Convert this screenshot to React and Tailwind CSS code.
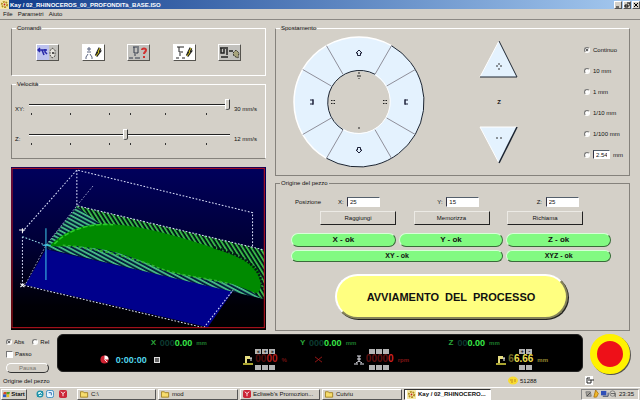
import React from "react";

function Group({ title, edges, className = "", bodyClass = "", children }) {
  return (
    <fieldset className={"min-w-0 border " + edges + " " + className}>
      <legend className="ml-1 h-2 px-px leading-2">{title}</legend>
      <div className={bodyClass}>{children}</div>
    </fieldset>
  );
}

function ToolButton({ label, white, children }) {
  return (
    <button
      aria-label={label}
      className={
        "h-[17px] w-[23px] border border-t-white border-l-white border-r-[#55534e] border-b-[#55534e] " +
        (white ? "bg-white" : "bg-[#c2c1bd]")
      }
    >
      <svg viewBox="0 0 21 15" className="block h-[15px] w-[21px]" fill="none" stroke="#222">
        {children}
      </svg>
    </button>
  );
}

function Toolbar() {
  return (
    <div className="flex justify-between">
      <ToolButton label="Origine macchina">
        <rect width="12" height="15" fill="#bdc2ee" stroke="none" />
        <path d="M1 5h9M3 3l-2 2 2 2M5 5l2 5M8 4v3l2 2" stroke="#2626a8" strokeWidth="1.500" />
        <path d="M15 3l3 2v6l-3 2-2-3V6z" stroke="#55534e" fill="#e6e4de" strokeDasharray="2 1" />
        <circle cx="16" cy="8" r="1" fill="#222" stroke="none" />
      </ToolButton>
      <ToolButton label="Modifica utensile" white>
        <path d="M6 2v4M4 4h4M4 7h4M5 9l-2 3M7 9l2 3M2 13h2M8 13h2" stroke="#5a6480" />
        <path d="M17 3l-2 4h1l-3 4" stroke="#222" strokeWidth="3" />
        <path d="M17 3l-2 4h1l-3 4" stroke="#d8c820" />
      </ToolButton>
      <ToolButton label="Informazioni utensile">
        <path d="M5 2h6M6 2v6h4V3M7 9v2M1 13h4M7 13h5" stroke="#333b4a" />
        <path d="M14 5c0-2 4-2 4 0 0 2-2 2-2 4M16 11v2" stroke="#d03030" strokeWidth="2" />
      </ToolButton>
      <ToolButton label="Modifica foratura" white>
        <path d="M3 2h7M5 2v5h4M6 8v3M2 13h3M8 13h3" />
        <path d="M17 3l-2 4h1l-3 4" strokeWidth="3" />
        <path d="M17 3l-2 4h1l-3 4" stroke="#d8c820" />
      </ToolButton>
      <ToolButton label="Parametri macchina">
        <path d="M1 3h8M2 3v5h3V4M8 4v6M2 12h7M10 6h4" strokeWidth="1.500" />
        <path d="M14 8l3-3 3 3-1 5-4-2z" fill="#a8a47c" stroke="#33312a" strokeDasharray="2 1" />
      </ToolButton>
    </div>
  );
}

function Speed({ id, axis, value, speed }) {
  return (
    <div className="flex">
      <label htmlFor={id} className="mt-2 w-[14px] leading-2">{axis}</label>
      <div className="flex-1">
        <input
          id={id}
          type="range"
          min="0"
          max="100"
          defaultValue={value}
          className="block h-4 w-full appearance-none bg-transparent [&::-webkit-slider-runnable-track]:h-[2px] [&::-webkit-slider-runnable-track]:border-t [&::-webkit-slider-runnable-track]:border-b [&::-webkit-slider-runnable-track]:border-t-[#222] [&::-webkit-slider-runnable-track]:border-b-white [&::-webkit-slider-thumb]:-mt-[6px] [&::-webkit-slider-thumb]:h-[11px] [&::-webkit-slider-thumb]:w-[5px] [&::-webkit-slider-thumb]:appearance-none [&::-webkit-slider-thumb]:rounded-b-sm [&::-webkit-slider-thumb]:border [&::-webkit-slider-thumb]:border-t-white [&::-webkit-slider-thumb]:border-l-white [&::-webkit-slider-thumb]:border-r-[#333] [&::-webkit-slider-thumb]:border-b-[#555] [&::-webkit-slider-thumb]:bg-[#d4d0c8]"
        />
        <div className="grid grid-cols-[39fr_39fr_21fr_36fr_41fr_24fr] pl-[2px]">
          {[0, 1, 2, 3, 4, 5].map((n) => (
            <span key={n} className="h-[2px] w-px bg-[#333]" />
          ))}
        </div>
      </div>
      <span className="mt-2 w-[34px] pl-1 leading-2 whitespace-nowrap">{speed}</span>
    </div>
  );
}

function Viewer() {
  return (
    <svg
      viewBox="36 21 759 489"
      preserveAspectRatio="none"
      className="mt-2 block h-[163px] w-full"
      role="img"
      aria-label="Percorso utensile"
    >
      <defs>
        <linearGradient id="sky" x1="0" y1="0" x2="0" y2="1">
          <stop offset="0" stopColor="#00005c" />
          <stop offset="0.45" stopColor="#000038" />
          <stop offset="0.85" stopColor="#000006" />
          <stop offset="1" stopColor="#000" />
        </linearGradient>
        <pattern id="hatch" width="11" height="11" patternUnits="userSpaceOnUse" patternTransform="rotate(-32)">
          <rect width="11" height="11" fill="#001a18" />
          <rect width="5" height="11" fill="#3cc44c" />
        </pattern>
        <pattern id="mesh" width="11" height="11" patternUnits="userSpaceOnUse" patternTransform="rotate(28)">
          <rect width="11" height="11" fill="#04203c" />
          <rect width="11" height="5" fill="#4cc58c" />
        </pattern>
      </defs>
      <rect x="36" y="21" width="759" height="489" fill="url(#sky)" />
      <path d="M140 268 L78 375 L622 502 L697 393Z" fill="#00008c" />
      <path d="M232 137 L790 270 L790 418 L690 385 L480 320 L180 240Z" fill="url(#hatch)" />
      <path d="M232 140 L140 256 L150 268 L690 394 L785 416 L700 362 L220 240 L300 190Z" fill="url(#mesh)" />
      <path
        d="M150 258 C190 215 250 190 330 192 C440 198 560 238 640 264 C720 292 775 315 778 350 C782 380 778 402 762 398 L695 372 C600 352 520 345 470 322 C400 290 330 268 260 262 C220 254 190 262 150 258Z"
        fill="#008a00"
      />
      <path d="M165 252 C200 215 260 188 340 194" stroke="#28cc28" strokeWidth="5" strokeDasharray="14 6" fill="none" />
      <path d="M190 256 C280 262 400 292 470 322 C540 348 610 352 690 372" stroke="#30b430" strokeWidth="5" strokeDasharray="9 7" fill="none" />
      <path d="M640 262 C720 285 785 315 784 390" stroke="#051c14" strokeWidth="8" strokeDasharray="6 4" fill="none" />
      <g fill="none" stroke="#dfe5ff" strokeWidth="3" strokeDasharray="5 5">
        <path d="M70 215 L232 30 L755 158 V262" />
        <path d="M232 30 V137 L790 270" />
        <path d="M280 78 L232 137 L140 256 L78 375" strokeWidth="2" />
        <path d="M70 230 V375 L610 503 L697 390" />
        <path d="M70 230 L140 256" stroke="#9adfe8" />
      </g>
      <path d="M140 205 V360 M130 256 H155" stroke="#3cc8ec" strokeWidth="3" />
      <path d="M60 210 H78 M70 205 V220 M64 371 L76 381 M76 371 L64 381" stroke="#fff" strokeWidth="3" />
      <rect x="39" y="25" width="751" height="478" fill="none" stroke="#c01420" strokeWidth="3" />
    </svg>
  );
}

const arrow = "M0 -3 L3 0 H1.500 V2.500 H-1.500 V0 H-3Z";

function Wheel() {
  return (
    <div className="relative h-[132px] w-[132px]">
      <svg viewBox="-66 -66 132 132" className="block h-full w-full" fill="none">
        <circle r="48" stroke="#e4f2fe" strokeWidth="34" />
        <path d="M-32.500 56.300 A65 65 0 0 1 -65 0 A65 65 0 0 1 32.500 -56.300" stroke="#fff" strokeWidth="1.500" />
        <path d="M32.500 -56.300 A65 65 0 0 1 -32.500 56.300" stroke="#1c2430" />
        <path d="M-16 27.700 A32 32 0 0 1 16 -27.700" stroke="#1c2430" />
        <path d="M16 -27.700 A32 32 0 0 1 -16 27.700" stroke="#fff" />
        <path
          d="M16 -27.700 L32.500 -56.300 M27.700 -16 L56.300 -32.500 M27.700 16 L56.300 32.500 M16 27.700 L32.500 56.300 M-16 27.700 L-32.500 56.300 M-27.700 16 L-56.300 32.500 M-27.700 -16 L-56.300 -32.500 M-16 -27.700 L-32.500 -56.300"
          stroke="#8f8f9a"
        />
        <g stroke="#1c2038" strokeWidth="1">
          <path d={arrow} transform="translate(0 -49)" />
          <path d={arrow} transform="translate(0 48) rotate(180)" />
          <path d="M-49 -2H-46V2H-49M-46 -3V3M49 -2H46V2H49M46 -3V3" />
        </g>
        <path d="M0 -30V-28M-2 -26H2M0 -24V-23M0 25V27" stroke="#222" />
        <path d="M-28 -1.500H-24M-28 1.500H-24M24 -1.500H28M24 1.500H28" stroke="#222" strokeDasharray="1.500 1" />
      </svg>
      <div className="absolute inset-0 grid grid-cols-3 grid-rows-3">
        <button aria-label="Y avanti" className="col-start-2 row-start-1" />
        <button aria-label="X sinistra" className="col-start-1 row-start-2" />
        <button aria-label="X destra" className="col-start-3 row-start-2" />
        <button aria-label="Y indietro" className="col-start-2 row-start-3" />
      </div>
    </div>
  );
}

function ZKeys() {
  return (
    <div className="flex flex-col items-center">
      <button aria-label="Z su">
        <svg viewBox="0 0 40 38" className="block h-[38px] w-10" fill="none">
          <path d="M20 1 L38 37 H1Z" fill="#e4f2fe" />
          <path d="M1 37 L20 1" stroke="#fff" />
          <path d="M20 1 L38 37 H1" stroke="#1c2430" />
          <path d="M20 23v2M17 26h2M21 26h2M20 28v2" stroke="#333" />
        </svg>
      </button>
      <span className="my-5 leading-2 font-bold">Z</span>
      <button aria-label="Z giù">
        <svg viewBox="0 0 40 38" className="block h-[38px] w-10" fill="none">
          <path d="M1 1 H38 L20 37Z" fill="#e4f2fe" />
          <path d="M20 37 L1 1 H38" stroke="#fff" />
          <path d="M38 1 L20 37" stroke="#1c2430" strokeWidth="1.500" />
          <path d="M17 12h2M21 12h2" stroke="#333" />
        </svg>
      </button>
    </div>
  );
}

const radioClass =
  "h-[6px] w-[6px] shrink-0 appearance-none rounded-full border border-t-[#777] border-l-[#777] border-r-white border-b-white bg-white bg-clip-padding checked:bg-[#333] checked:shadow-[inset_0_0_0_1px_white]";
const inputClass =
  "border border-t-[#55606c] border-l-[#334] border-r-white border-b-white bg-white px-[2px] leading-2";

function Steps() {
  const steps = ["Continuo", "10 mm", "1 mm", "1/10 mm", "1/100 mm"];
  return (
    <div className="flex flex-col">
      {steps.map((s, i) => (
        <label key={s} className="flex h-[21px] items-center gap-[3px] whitespace-nowrap">
          <input type="radio" name="step" defaultChecked={i === 0} className={radioClass} />
          {s}
        </label>
      ))}
      <div className="flex h-[21px] items-center gap-[3px]">
        <input type="radio" name="step" aria-label="Passo libero" className={radioClass} />
        <input aria-label="Passo" defaultValue="2.54" className={"h-[9px] w-[17px] " + inputClass} />
        mm
      </div>
    </div>
  );
}

const okClass =
  "rounded-full border border-t-[#d8ffd8] border-l-[#d8ffd8] border-r-[#3a6a3a] border-b-[#3a6a3a] bg-[#82fa82] font-bold whitespace-pre";

function Origin() {
  return (
    <>
      <div className="flex items-center">
        <span className="w-[43px] pl-1">Posizione</span>
        <div className="grid flex-1 grid-cols-[99fr_99fr_78fr]">
          {[["X:", "25"], ["Y:", "15"], ["Z:", "25"]].map(([axis, v]) => (
            <label key={axis} className="flex items-center">
              <span className="w-[13px] pl-1">{axis}</span>
              <input defaultValue={v} className={"h-[10px] w-[33px] " + inputClass} />
            </label>
          ))}
        </div>
      </div>
      <div className="mt-1 flex justify-between pr-[28px] pl-[29px]">
        {["Raggiungi", "Memorizza", "Richiama"].map((t) => (
          <button
            key={t}
            className="h-[14px] w-[76px] border border-t-[#eceae5] border-l-[#eceae5] border-r-[#222] border-b-[#222]"
          >
            {t}
          </button>
        ))}
      </div>
      <div className="mt-2 grid grid-cols-3 gap-[3px] text-[8px]">
        <button className={"h-[14px] " + okClass}>X - ok</button>
        <button className={"h-[14px] " + okClass}>Y - ok</button>
        <button className={"h-[14px] " + okClass}>Z - ok</button>
        <button className={"col-span-2 h-[12px] text-[7px] " + okClass}>XY - ok</button>
        <button className={"h-[12px] text-[7px] " + okClass}>XYZ - ok</button>
      </div>
      <button className="mx-auto mt-3 block h-[45px] w-[233px] rounded-full border-2 border-t-white border-l-white border-r-[#85835a] border-b-[#85835a] bg-[#ffff80] text-[11px] font-bold whitespace-pre shadow-[1px_1px_0_#222]">
        AVVIAMENTO  DEL  PROCESSO
      </button>
    </>
  );
}

function Axis({ name, ghost, value }) {
  return (
    <div className="flex items-center gap-1 font-bold text-[#38e848]">
      <span className="w-[5px] text-[8px] text-[#2ba83a]">{name}</span>
      <span className="text-[9px]">
        <span className="text-[#0c3a30]">{ghost}</span>
        {value}
      </span>
      <span className="text-[6px] text-[#1d7a2c]">mm</span>
    </div>
  );
}

function Keys({ count, signs = "", label }) {
  return (
    <div className="flex gap-px">
      {Array.from({ length: count }, (_, i) => (
        <button key={i} aria-label={label + " " + (i + 1)} className="h-[5px] w-[6px] bg-[#b4b4b4] text-[5px] leading-[5px] font-bold text-black">
          {signs[i]}
        </button>
      ))}
    </div>
  );
}

function Drive({ icon, ghost, value, unit, color, count, signs, label, offset }) {
  return (
    <div className={"flex items-center gap-[2px] font-bold " + color}>
      {icon}
      <div className="flex flex-col">
        <div className={offset}><Keys count={count} signs={signs} label={label + " su"} /></div>
        <span className="text-[10px] leading-[10px] whitespace-nowrap">
          <span className="opacity-45">{ghost}</span>
          {value}
          <span className="pl-1 text-[6px] opacity-60">{unit}</span>
        </span>
        <div className={offset}><Keys count={count} label={label + " giù"} /></div>
      </div>
    </div>
  );
}

function MillIcon() {
  return (
    <svg viewBox="0 0 10 10" className="h-[10px] w-[10px] shrink-0" fill="none">
      <path d="M2 1h5v3H4v4H2z" fill="#e4dc80" />
      <path d="M7 3h2M8 3v3" stroke="#fff" />
      <path d="M0 9h10" stroke="#e4dc40" strokeWidth="1.500" />
    </svg>
  );
}

function SpindleIcon() {
  return (
    <svg viewBox="0 0 10 10" className="h-[10px] w-[10px] shrink-0" fill="none" stroke="#e4e4ec">
      <path d="M3 1h4M5 1v5M3 4h4M5 6l-3 2M5 6l3 2M0 9h4M6 9h4" />
    </svg>
  );
}

function Display() {
  return (
    <div className="min-w-0 flex-1 self-start rounded-md border border-[#222] bg-black pt-[2px] pb-px">
      <div className="grid h-3 grid-cols-[93fr_150fr_149fr_134fr] items-center">
        <span />
        <Axis name="X" ghost="000" value="0.00" />
        <Axis name="Y" ghost="000" value="0.00" />
        <Axis name="Z" ghost="00" value="0.00" />
      </div>
      <div className="grid h-[21px] grid-cols-[42fr_144fr_72fr_39fr_143fr_86fr] items-center">
        <span />
        <div className="flex items-center gap-[7px] text-[9px] font-bold text-[#52d8ee]">
          <svg viewBox="0 0 10 10" className="h-[9px] w-[9px]">
            <circle cx="5" cy="5" r="4.500" fill="#cf2232" />
            <path d="M5 0.500A4.500 4.500 0 0 1 9.500 5L5 5Z" fill="#fff" />
            <path d="M5 5L8 8" stroke="#fff" />
          </svg>
          <span>0:00:00</span>
          <button aria-label="Azzera tempo" className="h-[6px] w-[6px] border border-[#ddd] bg-[#666]" />
        </div>
        <Drive label="Avanzamento" icon={<MillIcon />} ghost="00" value="00" unit="%" color="text-[#b01c1c]" count={3} signs="«+»" offset="pl-0" />
        <svg viewBox="0 0 8 8" className="h-[7px] w-[7px]" stroke="#a81818">
          <path d="M0 1L8 7M8 1L0 7" />
        </svg>
        <Drive label="Mandrino" icon={<SpindleIcon />} ghost="0000" value="0" unit="rpm" color="text-[#d02020]" count={3} offset="pl-[3px]" />
        <Drive label="Utensile" icon={<MillIcon />} ghost="6" value="6.66" unit="mm" color="text-[#ecdf50]" count={2} signs="+-" offset="pl-[11px]" />
      </div>
    </div>
  );
}

function Folder() {
  return (
    <svg viewBox="0 0 10 8" className="h-2 w-[9px] shrink-0">
      <path d="M0.500 1.500h3l1 1h4v5h-8z" fill="#f6dc6c" stroke="#a08020" />
    </svg>
  );
}

function RedApp() {
  return (
    <svg viewBox="0 0 9 9" className="h-2 w-2 shrink-0">
      <rect width="9" height="9" rx="2" fill="#cc2638" />
      <path d="M2 2l2.500 2L7 2M4.500 4v3" stroke="#fff" fill="none" />
    </svg>
  );
}

function KayIcon() {
  return (
    <svg viewBox="0 0 10 10" className="h-[9px] w-[9px] shrink-0">
      <rect width="10" height="10" fill="#f4e9a8" />
      <circle cx="5" cy="5" r="3" fill="none" stroke="#b08a18" strokeWidth="2" strokeDasharray="2 1" />
      <circle cx="5" cy="5" r="1" fill="#c02020" />
    </svg>
  );
}

const raised = "border border-t-white border-l-white border-r-[#555] border-b-[#555]";

function Taskbar() {
  const tasks = [
    [<Folder />, "C:\\"],
    [<Folder />, "mod"],
    [<RedApp />, "Ecliweb's Promozion..."],
    [<Folder />, "Cutviu"],
    [<KayIcon />, "Kay / 02_RHINOCERO..."],
  ];
  return (
    <footer className="flex h-[13px] items-center border-t border-white pr-px pl-px">
      <button className={"flex h-[11px] w-[26px] items-center justify-center gap-px font-bold " + raised}>
        <svg viewBox="0 0 8 8" className="h-[7px] w-[7px]">
          <path d="M1 1h3v3H0z" fill="#d84a20" />
          <path d="M4 1h4L7 4H4z" fill="#4c9c28" />
          <path d="M0 4h4v3H0z" fill="#2c58c8" />
          <path d="M4 4h3v3H4z" fill="#e8c020" />
        </svg>
        Start
      </button>
      <div className="flex w-[50px] items-center gap-[2px] pl-[9px]">
        <svg viewBox="0 0 9 9" className="h-2 w-2">
          <circle cx="4.500" cy="4.500" r="3.200" fill="#d8f6f8" stroke="#1c90a8" strokeWidth="1.500" />
          <path d="M2 5h5M1 8L8 1" stroke="#1c90a8" />
        </svg>
        <svg viewBox="0 0 9 9" className="h-2 w-2">
          <rect x="0.500" y="0.500" width="8" height="8" rx="2" fill="#e8f6ff" stroke="#3088c0" />
          <path d="M3 3h3v3" stroke="#2060a8" fill="none" />
        </svg>
        <span className="pl-[3px]"><RedApp /></span>
      </div>
      <div className="grid w-[414px] shrink grid-cols-[79fr_80fr_80fr_80fr_87fr] gap-[2px]">
        {tasks.map(([icon, text], i) => (
          <button
            key={text}
            className={
              "flex h-[11px] min-w-0 items-center gap-[2px] px-[2px] whitespace-nowrap " +
              (i === 4
                ? "border border-t-[#333] border-l-[#333] border-r-white border-b-white bg-white font-bold"
                : raised)
            }
          >
            {icon}
            {text}
          </button>
        ))}
      </div>
      <div className="ml-auto flex h-[11px] w-[58px] items-center gap-[2px] border border-t-[#888] border-l-[#888] border-r-white border-b-white pl-[3px]">
        <svg viewBox="0 0 36 9" className="h-2 w-8">
          <path d="M1 2h5l1 5H2z" fill="#a8a49c" stroke="#777" />
          <path d="M2 7l4-4" stroke="#444" />
          <path d="M12 0l3 4-2 4h-3z" fill="#f0b828" stroke="#b07810" />
          <rect x="18" y="1" width="6" height="5" fill="#3050b8" />
          <path d="M20 7h6V3" stroke="#26365a" fill="none" />
          <circle cx="31" cy="4" r="3" fill="#d8d4cc" stroke="#777" />
          <path d="M29 4h5v4" stroke="#555" fill="none" />
        </svg>
        <span>23:35</span>
      </div>
    </footer>
  );
}

export default function App() {
  return (
    <div className="flex min-h-screen flex-col bg-[#d4d0c8] font-['Liberation_Sans',Arial,sans-serif] text-[6px] leading-2 text-[#111]">
      <header>
        <div className="flex h-[9px] items-center gap-px bg-linear-to-r from-[#0f3a8a] to-[#a6caf0] text-white">
          <KayIcon />
          <h1 className="flex-1 font-bold">Kay / 02_RHINOCEROS_00_PROFONDITà_BASE.ISO</h1>
          {[
            ["Riduci", "M1 5h3"],
            ["Ripristina", "M3 1h3v3M1 3h3v2H1z"],
            ["Chiudi", "M1 1l4 4M5 1l-4 4"],
          ].map(([label, d]) => (
            <button key={label} aria-label={label} className={"h-2 w-2 bg-[#d4d0c8] " + raised}>
              <svg viewBox="0 0 6 6" className="block h-full w-full" fill="none" stroke="#000">
                <path d={d} />
              </svg>
            </button>
          ))}
        </div>
        <nav className="flex h-[11px] items-center gap-[5px] border-b border-[#8c8984] pl-[3px]">
          <button>File</button>
          <button>Parametri</button>
          <button>Aiuto</button>
        </nav>
      </header>

      <main className="grid grid-cols-[255fr_355fr] gap-[9px] pt-1 pr-[10px] pl-[11px]">
        <div>
          <Group
            title="Comandi"
            edges="border-t-white border-r-white border-b-white border-l-[#85827c]"
            bodyClass="px-6 pt-3 pb-[14px]"
          >
            <Toolbar />
          </Group>
          <Group
            title="Velocità"
            edges="border-t-white border-r-white border-b-[#85827c] border-l-[#85827c]"
            className="mt-1"
            bodyClass="flex flex-col gap-3 pt-[9px] pr-px pb-[13px] pl-[3px]"
          >
            <Speed id="speed-xy" axis="XY:" value={100} speed="30 mm/s" />
            <Speed id="speed-z" axis="Z:" value={48} speed="12 mm/s" />
          </Group>
          <Viewer />
        </div>

        <div>
          <Group
            title="Spostamento"
            edges="border-t-white border-r-[#85827c] border-b-[#85827c] border-l-[#85827c]"
            bodyClass="grid grid-cols-[203fr_90fr_60fr] items-center pt-1 pb-[7px]"
          >
            <div className="pl-[17px]"><Wheel /></div>
            <div className="flex"><ZKeys /></div>
            <div className="pl-[15px]"><Steps /></div>
          </Group>
          <Group
            title="Origine del pezzo"
            edges="border-[#85827c]"
            className="mt-[3px]"
            bodyClass="pt-[10px] pr-[18px] pb-[11px] pl-[15px]"
          >
            <Origin />
          </Group>
        </div>
      </main>

      <section className="mt-[3px] flex">
        <div className="w-[57px] pt-1 pl-[6px]">
          <div className="flex gap-2">
            <label className="flex items-center gap-[2px]">
              <input type="radio" name="coord" defaultChecked className={radioClass} />
              Abs
            </label>
            <label className="flex items-center gap-[2px]">
              <input type="radio" name="coord" className={radioClass} />
              Rel
            </label>
          </div>
          <label className="mt-1 flex items-center gap-[2px]">
            <input type="checkbox" className="h-[7px] w-[7px] appearance-none border border-t-[#777] border-l-[#777] border-r-white border-b-white bg-white checked:bg-[#333]" />
            Passo
          </label>
          <button className="mt-[5px] block h-[10px] w-[43px] rounded-full border border-t-white border-l-white border-r-[#333] border-b-[#333] text-[#77746e]">
            Pausa
          </button>
        </div>
        <Display />
        <div className="flex w-[57px] justify-center pr-1">
          <button
            aria-label="Arresto di emergenza"
            className="h-10 w-10 rounded-full border-[7px] border-[#fff200] bg-[#ee1018] shadow-[1px_1px_0_#55534e]"
          />
        </div>
      </section>

      <div className="flex h-[13px] items-center pl-[3px]">
        <span className="flex-1">Origine del pezzo</span>
        <svg viewBox="0 0 11 9" className="h-[9px] w-[11px]">
          <ellipse cx="5" cy="4.500" rx="5" ry="4" fill="#f8dc30" />
          <path d="M2 4h3M7 3v3M3 6h2" stroke="#c08818" />
        </svg>
        <span className="w-[66px] pl-px">51288</span>
        <svg viewBox="0 0 9 9" className="mr-[46px] h-[9px] w-[9px]">
          <rect width="8" height="9" fill="#fff" />
          <path d="M2 2v5M2 2h3M3 4h3v3H2M6 4h3" stroke="#222" fill="none" />
        </svg>
      </div>

      <div className="mt-auto">
        <Taskbar />
      </div>
    </div>
  );
}
